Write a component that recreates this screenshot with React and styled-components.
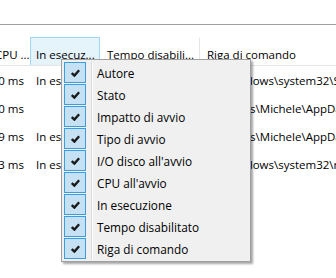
import React from 'react'
import styled, { createGlobalStyle } from 'styled-components'

const GlobalStyle = createGlobalStyle`
  body {
    margin: 0;
    background: #ffffff;
    font-family: 'Open Sans', 'Noto Sans', sans-serif;
    font-size: 11.5px;
    color: #000000;
  }
`

const Page = styled.div`
  position: relative;
  width: 336px;
  height: 278px;
  overflow: hidden;
  background: #ffffff;
`

const TopArea = styled.div`
  height: 24px;
  border-bottom: 1px solid #a0a0a0;
`

const Table = styled.div`
  margin-left: -12px;
  width: 600px;
`

const HeaderRow = styled.div`
  display: flex;
  padding-top: 12px;
  border-bottom: 1px solid #e5e5e5;
`

const HeaderCell = styled.div`
  box-sizing: border-box;
  width: ${(p) => p.$w}px;
  flex: none;
  height: 28px;
  display: flex;
  align-items: flex-end;
  padding: 0 0 3px ${(p) => p.$pad ?? 6}px;
  white-space: nowrap;
  overflow: hidden;
  background: ${(p) => (p.$hot ? '#e5f3fb' : 'transparent')};
  border: 1px solid ${(p) => (p.$hot ? '#a3d6f2' : 'transparent')};
  border-bottom: none;
  border-right: 1px solid ${(p) => (p.$hot ? '#a3d6f2' : p.$sep ? '#e5e5e5' : 'transparent')};
`

const Row = styled.div`
  display: flex;
  height: 27px;
  align-items: center;
  padding-top: 1px;
`

const Cell = styled.div`
  box-sizing: border-box;
  width: ${(p) => p.$w}px;
  flex: none;
  display: flex;
  justify-content: ${(p) => (p.$right ? 'flex-end' : 'flex-start')};
  padding: ${(p) => (p.$right ? '0 6px 0 0' : '0 0 0 6px')};
  white-space: nowrap;
  overflow: hidden;
`

const Menu = styled.div`
  position: absolute;
  left: 61px;
  top: 59px;
  width: 190px;
  box-sizing: border-box;
  padding: 2px 2px 1px;
  background: #f0f0f0;
  border: 1px solid #a0a0a0;
  box-shadow: 2px 2px 2px rgba(0, 0, 0, 0.35);
`

const Item = styled.div`
  display: flex;
  height: 22px;
  align-items: flex-start;
`

const CheckBox = styled.div`
  box-sizing: border-box;
  width: 22px;
  height: 21px;
  flex: none;
  display: flex;
  align-items: center;
  justify-content: center;
  background: #c6e1f3;
  border: 1px solid #3a9ddd;
`

const Gutter = styled.div`
  width: 1px;
  height: 22px;
  margin-left: 5px;
  background: #dadada;
  border-right: 1px solid #ffffff;
`

const Label = styled.div`
  margin-left: 4px;
  height: 21px;
  display: flex;
  align-items: center;
  white-space: nowrap;
  font-size: 11.8px;
`

const columns = [
  "Autore",
  "Stato",
  "Impatto di avvio",
  "Tipo di avvio",
  "I/O disco all'avvio",
  "CPU all'avvio",
  "In esecuzione",
  "Tempo disabilitato",
  "Riga di comando",
]

const rows = [
  { cpu: '180 ms', state: 'In esecuzione', cmd: '"C:\\Windows\\system32\\SecurityHealthSystray.exe"' },
  { cpu: '50 ms', state: '', cmd: '"C:\\Users\\Michele\\AppData\\Local\\Microsoft\\OneDrive"' },
  { cpu: '129 ms', state: 'In esecuzione', cmd: '"C:\\Users\\Michele\\AppData\\Roaming\\Spotify"' },
  { cpu: '23 ms', state: 'In esecuzione', cmd: '"C:\\Windows\\system32\\rundll32.exe"' },
]

function Check() {
  return (
    <svg width="9" height="8" viewBox="0 0 9 8">
      <path d="M0.8 4 L3.4 6.6 L8.2 1.2" fill="none" stroke="#1a1a1a" strokeWidth="2.4" />
    </svg>
  )
}

export default function App() {
  return (
    <Page>
      <GlobalStyle />
      <TopArea />
      <Table>
        <HeaderRow>
          <HeaderCell $w={42}>CPU ...</HeaderCell>
          <HeaderCell $w={70} $hot $pad={5}>In esecuz...</HeaderCell>
          <HeaderCell $w={100} $sep>Tempo disabili...</HeaderCell>
          <HeaderCell $w={200}>Riga di comando</HeaderCell>
        </HeaderRow>
        {rows.map((r, i) => (
          <Row key={i}>
            <Cell $w={42} $right>{r.cpu}</Cell>
            <Cell $w={70}>{r.state}</Cell>
            <Cell $w={100} />
            <Cell $w={300}>{r.cmd}</Cell>
          </Row>
        ))}
      </Table>
      <Menu>
        {columns.map((c) => (
          <Item key={c}>
            <CheckBox>
              <Check />
            </CheckBox>
            <Gutter />
            <Label>{c}</Label>
          </Item>
        ))}
      </Menu>
    </Page>
  )
}
